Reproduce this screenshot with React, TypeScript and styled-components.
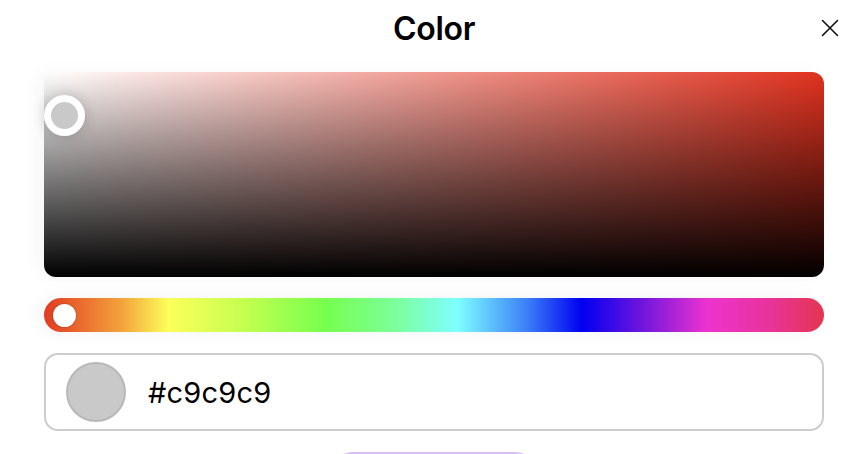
import styled, { createGlobalStyle } from "styled-components";

const GlobalStyle = createGlobalStyle`
  body {
    margin: 0;
    background: #ffffff;
    font-family: Inter, "Noto Sans", sans-serif;
    overflow: hidden;
  }
`;

const hueStops =
  "#e23a22 0%, #f3a33c 10%, #fdff5b 16%, #c2ff4f 26%, #77ff4d 36%, #7cff9a 45%, #7effff 53%, #3b7ef7 62%, #0000f0 69%, #7417dc 77%, #ec33d0 85%, #e8339a 93%, #e53550 100%";

const App = () => {
  const hex = "#c9c9c9";
  return (
    <>
      <GlobalStyle />
      <Sheet>
        <Header>
          <Title>Color</Title>
          <CloseButton aria-label="Close">
            <svg width="18" height="18" viewBox="0 0 18 18">
              <path
                d="M1.5 1.5 L16.5 16.5 M16.5 1.5 L1.5 16.5"
                stroke="#111"
                strokeWidth="1.6"
                strokeLinecap="round"
              />
            </svg>
          </CloseButton>
        </Header>
        <Saturation hue="#e2321f">
          <SatHandle $x={20} $y={43} $fill={hex} />
        </Saturation>
        <HueBar>
          <HueHandle $x={20} />
        </HueBar>
        <HexField>
          <Swatch $fill={hex} />
          <HexText>{hex}</HexText>
        </HexField>
        <Footer>
          <ApplyButton />
        </Footer>
      </Sheet>
    </>
  );
};

export default App;

const Sheet = styled.div`
  display: flex;
  flex-direction: column;
  padding: 0 36px 0 44px;
  & > * {
    flex-shrink: 0;
  }
`;

const Header = styled.div`
  position: relative;
  height: 56px;
  display: flex;
  align-items: center;
  justify-content: center;
  margin-bottom: 16px;
`;

const Title = styled.h1`
  margin: 0;
  font-size: 32px;
  font-weight: 600;
  color: #000;
  letter-spacing: -0.3px;
`;

const CloseButton = styled.button`
  position: absolute;
  right: -16px;
  top: 18px;
  width: 20px;
  height: 20px;
  padding: 0;
  border: none;
  background: none;
  display: flex;
  align-items: center;
  justify-content: center;
`;

const Saturation = styled.div<{ hue: string }>`
  position: relative;
  height: 205px;
  border-radius: 12px;
  background:
    linear-gradient(to bottom, rgba(0, 0, 0, 0), #000),
    linear-gradient(to right, #fff, rgba(255, 255, 255, 0)),
    ${(p) => p.hue};
  box-shadow: -6px 0 18px rgba(0, 0, 0, 0.04);
`;

const SatHandle = styled.div<{ $x: number; $y: number; $fill: string }>`
  position: absolute;
  left: ${(p) => p.$x}px;
  top: ${(p) => p.$y}px;
  width: 41px;
  height: 41px;
  margin: -20px 0 0 -20px;
  box-sizing: border-box;
  border-radius: 50%;
  border: 7px solid #fff;
  background: ${(p) => p.$fill};
  box-shadow: 0 0 14px rgba(0, 0, 0, 0.18);
`;

const HueBar = styled.div`
  position: relative;
  margin-top: 21px;
  height: 34px;
  border-radius: 17px;
  background: linear-gradient(to right, ${hueStops});
  box-shadow: -6px 0 18px rgba(0, 0, 0, 0.05);
`;

const HueHandle = styled.div<{ $x: number }>`
  position: absolute;
  left: ${(p) => p.$x}px;
  top: 50%;
  width: 23px;
  height: 23px;
  margin: -11.5px 0 0 -11.5px;
  border-radius: 50%;
  background: #fff;
  box-shadow: 0 0 2px rgba(0, 0, 0, 0.35);
`;

const HexField = styled.div`
  margin-top: 21px;
  height: 78px;
  box-sizing: border-box;
  border: 2px solid #cccccc;
  border-radius: 14px;
  display: flex;
  align-items: center;
  padding-left: 20px;
  gap: 22px;
`;

const Swatch = styled.div<{ $fill: string }>`
  width: 60px;
  height: 60px;
  box-sizing: border-box;
  border-radius: 50%;
  background: ${(p) => p.$fill};
  border: 2px solid #b8b8b8;
`;

const HexText = styled.span`
  font-size: 29px;
  color: #000;
  letter-spacing: 0.2px;
`;

const Footer = styled.div`
  display: flex;
  justify-content: center;
  margin-top: 21px;
`;

const ApplyButton = styled.button`
  width: 210px;
  height: 48px;
  border: none;
  border-radius: 24px;
  background: #d6c0f2;
`;
